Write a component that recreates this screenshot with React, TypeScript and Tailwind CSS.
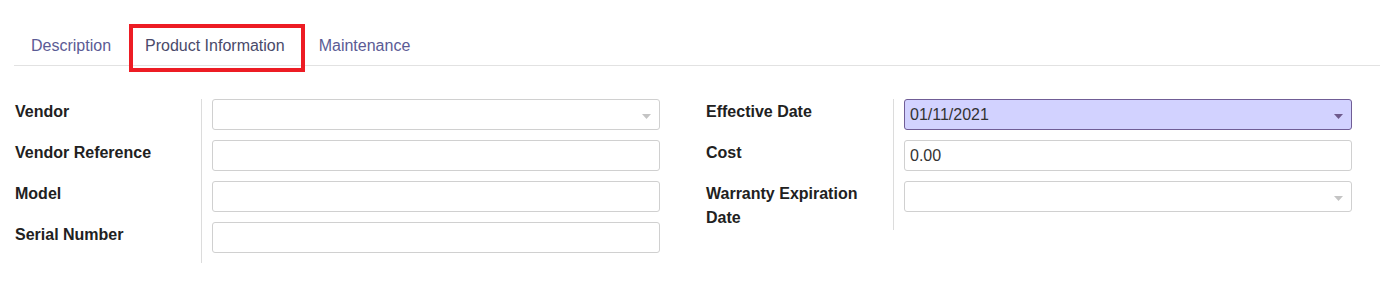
import React from "react";

const Caret = ({ color }: { color: string }) => (
  <svg width="9" height="5" viewBox="0 0 9 5" className="absolute right-[8px] top-[14px]">
    <path d="M0 0 L9 0 L4.5 5 Z" fill={color} />
  </svg>
);

type Field = {
  label: string;
  value?: string;
  select?: boolean;
  active?: boolean;
};

const Input = ({ f }: { f: Field }) => {
  if (f.active) {
    return (
      <div className="relative h-[31px] w-[448px] rounded-[3px] border border-[#705d96] bg-[#d2d2ff] pl-[5px] text-[16px] leading-[29px] text-[#333]">
        {f.value}
        <Caret color="#6e5a8c" />
      </div>
    );
  }
  return (
    <div className="relative h-[31px] w-[448px] rounded-[3px] border border-[#d0d0d0] bg-white pl-[5px] text-[16px] leading-[29px] text-[#333]">
      {f.value}
      {f.select && <Caret color="#c4c4c4" />}
    </div>
  );
};

const Group = ({ fields, wide }: { fields: Field[]; wide?: boolean }) => (
  <div className="flex flex-col">
    {fields.map((f) => (
      <div key={f.label} className="flex">
        <div
          className={
            (wide ? "w-[187px] " : "w-[186px] ") +
            "pr-[20px] pt-[1px] text-[16px] font-bold leading-[24px] text-[#212121]"
          }
        >
          {f.label}
        </div>
        <div className="border-l border-[#dcdcdc] pb-[10px] pl-[10px]">
          <Input f={f} />
        </div>
      </div>
    ))}
  </div>
);

export default function App() {
  const left: Field[] = [
    { label: "Vendor", select: true },
    { label: "Vendor Reference" },
    { label: "Model" },
    { label: "Serial Number" },
  ];
  const right: Field[] = [
    { label: "Effective Date", value: "01/11/2021", active: true },
    { label: "Cost", value: "0.00" },
    { label: "Warranty Expiration Date", select: true },
  ];
  return (
    <div
      className="h-[291px] w-[1393px] bg-white"
      style={{ fontFamily: '"Liberation Sans", Arial, sans-serif' }}
    >
      <div className="pt-[26px]">
        <div className="ml-[14px] mr-[13px] flex h-[40px] border-b border-[#e2e2e2]">
          <div className="flex items-center px-[17px] text-[16px] text-[#5b5b95]">Description</div>
          <div className="relative flex items-center px-[17px] text-[16px] text-[#4a4a6a]">
            Product Information
            <div className="absolute left-[1px] top-[-2px] h-[48px] w-[176px] border-[4px] border-[#ed1c24]" />
          </div>
          <div className="flex items-center px-[17px] text-[16px] text-[#5b5b95]">Maintenance</div>
        </div>
      </div>
      <div className="flex gap-[46px] pl-[15px] pt-[33px]">
        <Group fields={left} />
        <Group fields={right} wide />
      </div>
    </div>
  );
}
